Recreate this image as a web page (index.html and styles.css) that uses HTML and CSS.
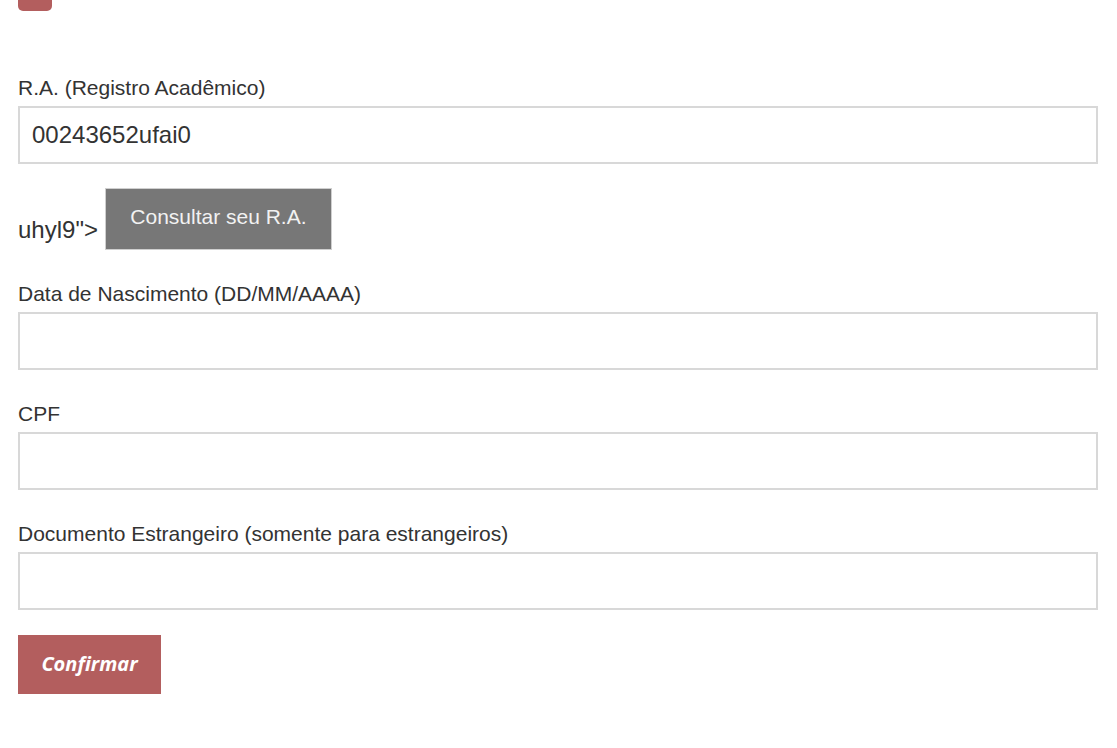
FILE: index.html
```html
<!DOCTYPE html>
<html lang="pt-BR">
<head>
<meta charset="utf-8">
<title>Consulta</title>
<link rel="stylesheet" href="styles.css">
</head>
<body>
<div class="page">
  <div class="top-tab"></div>
  <form class="form">
    <div class="group">
      <label class="label" for="ra">R.A. (Registro Acadêmico)</label>
      <input class="field" id="ra" type="text" value="00243652ufai0">
    </div>
    <div class="consult-row">
      <span class="stray">uhyl9"&gt;</span>
      <button type="button" class="btn-consult">Consultar seu R.A.</button>
    </div>
    <div class="group">
      <label class="label" for="nasc">Data de Nascimento (DD/MM/AAAA)</label>
      <input class="field" id="nasc" type="text">
    </div>
    <div class="group">
      <label class="label" for="cpf">CPF</label>
      <input class="field" id="cpf" type="text">
    </div>
    <div class="group">
      <label class="label" for="doc">Documento Estrangeiro (somente para estrangeiros)</label>
      <input class="field" id="doc" type="text">
    </div>
    <button type="submit" class="btn-confirm">Confirmar</button>
  </form>
</div>
</body>
</html>
```

FILE: styles.css
```css
* { box-sizing: border-box; }
html, body {
  margin: 0;
  padding: 0;
  background: #ffffff;
}
body {
  font-family: "Liberation Sans", Arial, sans-serif;
  color: #333333;
  font-size: 21px;
}
.page {
  padding: 0 19px 0 18px;
}
.top-tab {
  width: 34px;
  height: 11px;
  background: #b35e5e;
  border-radius: 0 0 5px 5px;
}
.form {
  margin-top: 63px;
  display: flex;
  flex-direction: column;
  align-items: flex-start;
}
.group {
  width: 100%;
  display: flex;
  flex-direction: column;
  margin-bottom: 30px;
}
.group:first-child {
  margin-bottom: 24px;
}
.label {
  display: block;
  font-size: 21px;
  line-height: 28px;
  height: 28px;
  margin-bottom: 4px;
  color: #333333;
}
.field {
  width: 100%;
  height: 58px;
  border: 2px solid #d8d8d8;
  border-radius: 0;
  padding: 0 12px;
  font-family: "Liberation Sans", Arial, sans-serif;
  font-size: 24px;
  color: #333333;
  background: #ffffff;
  outline: none;
}
.consult-row {
  display: flex;
  align-items: flex-end;
  margin-bottom: 30px;
}
.stray {
  font-size: 24px;
  line-height: 26px;
  margin-bottom: 7px;
  margin-right: 7px;
}
.btn-consult {
  width: 227px;
  height: 62px;
  background: #777777;
  border: 1px solid #cfcfcf;
  color: #f2f2f2;
  font-family: "Liberation Sans", Arial, sans-serif;
  font-size: 21px;
  padding: 0 0 4px 0;
  cursor: pointer;
}
.btn-confirm {
  width: 143px;
  height: 59px;
  margin-top: -5px;
  background: #b35e5e;
  border: none;
  color: #ffffff;
  font-family: "Open Sans", "Noto Sans", sans-serif;
  font-weight: 700;
  font-style: italic;
  font-size: 20px;
  padding: 0 0 2px 0;
  cursor: pointer;
}
```
